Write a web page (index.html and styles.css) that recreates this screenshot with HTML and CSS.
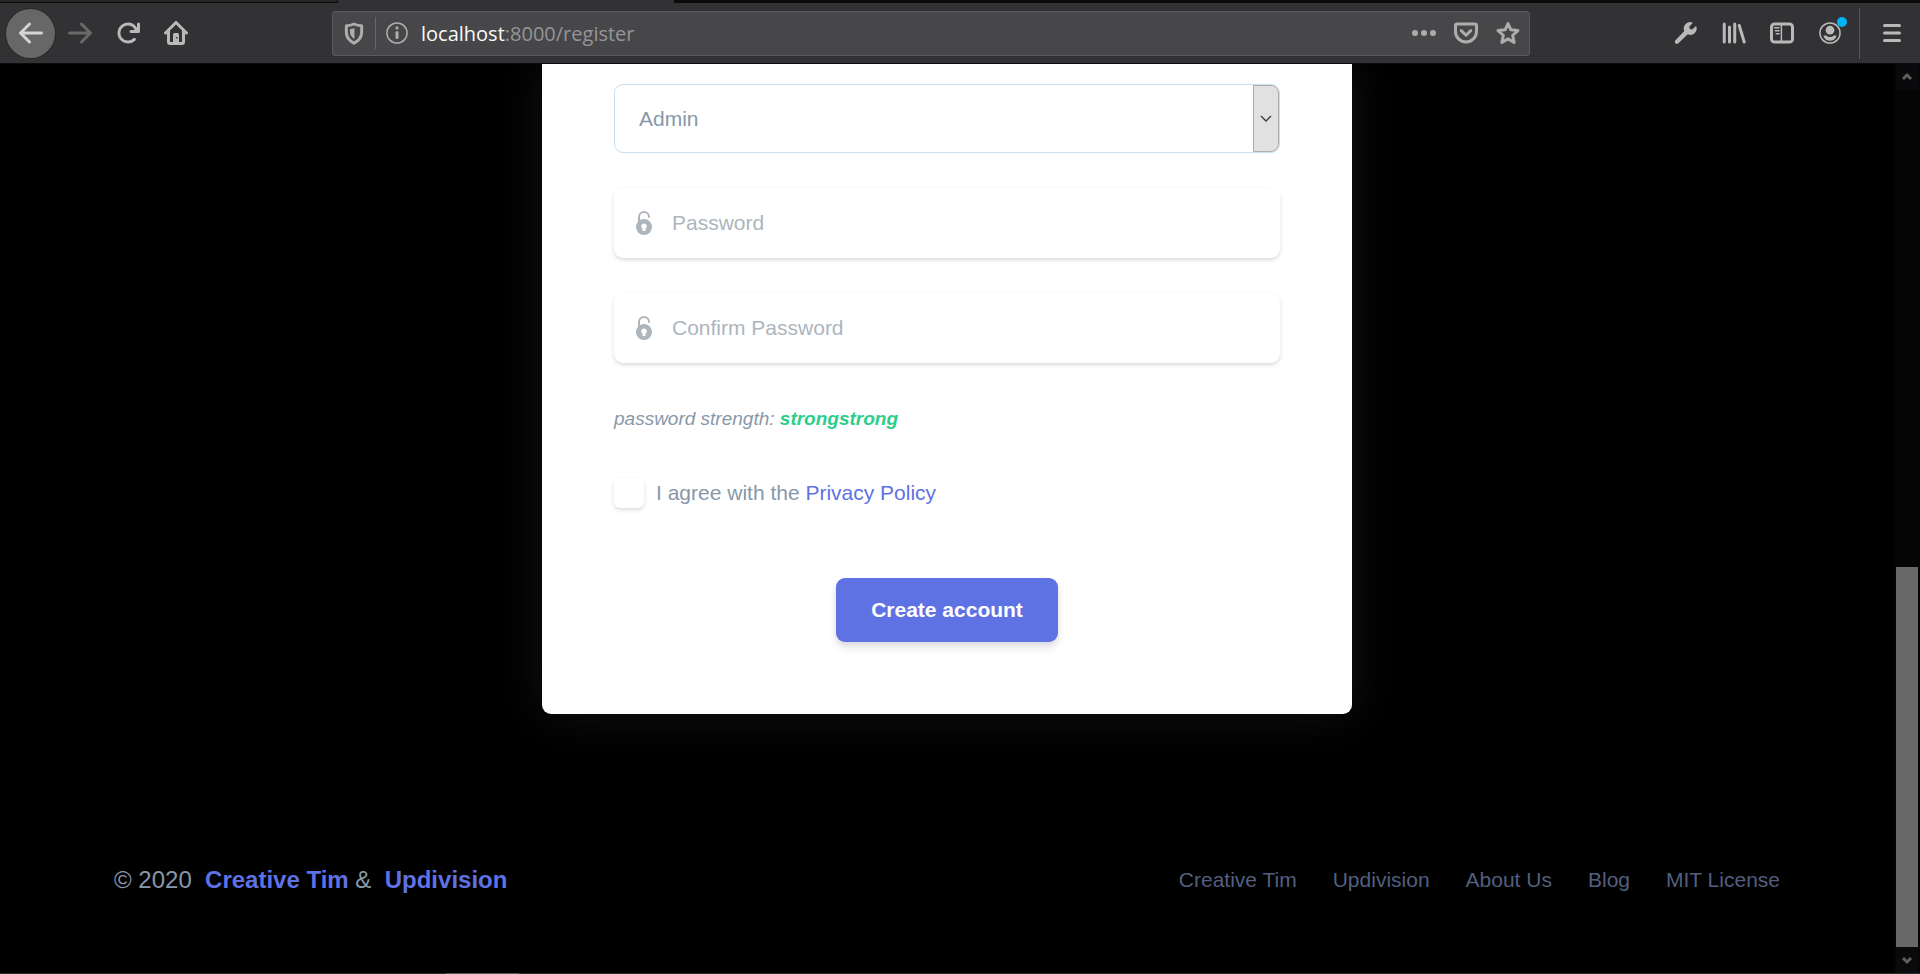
FILE: index.html
```html
<!DOCTYPE html>
<html lang="en">
<head>
<meta charset="utf-8">
<meta name="viewport" content="width=device-width, initial-scale=1">
<title>Register</title>
<link rel="stylesheet" href="styles.css">
</head>
<body>
<header class="chrome">
  <div class="tabstrip">
    <div class="tab"></div>
    <div class="tab tab-active"></div>
  </div>
  <div class="toolbar">
    <button class="tool back" aria-label="Back"><svg viewBox="0 0 16 16"><path d="M15 7H3.414l4.293-4.293a1 1 0 0 0-1.414-1.414l-6 6a1 1 0 0 0 0 1.414l6 6a1 1 0 0 0 1.414-1.414L3.414 9H15a1 1 0 0 0 0-2z"/></svg></button>
    <button class="tool forward" aria-label="Forward" disabled><svg viewBox="0 0 16 16"><path d="M1 7h11.586L8.293 2.707a1 1 0 0 1 1.414-1.414l6 6a1 1 0 0 1 0 1.414l-6 6a1 1 0 0 1-1.414-1.414L12.586 9H1a1 1 0 0 1 0-2z"/></svg></button>
    <button class="tool" aria-label="Reload"><svg viewBox="0 0 16 16"><path d="M15 1a1 1 0 0 0-1 1v2.418A6.995 6.995 0 1 0 8 15a6.954 6.954 0 0 0 4.95-2.05 1 1 0 0 0-1.414-1.414A5.019 5.019 0 1 1 12.549 6H10a1 1 0 0 0 0 2h5a1 1 0 0 0 1-1V2a1 1 0 0 0-1-1z"/></svg></button>
    <button class="tool" aria-label="Home"><svg viewBox="0 0 16 16"><path fill-rule="evenodd" d="M15.707 7.293l-7-7a1 1 0 0 0-1.414 0l-7 7a1 1 0 0 0 1.414 1.414L2 8.414V14a2 2 0 0 0 2 2h8a2 2 0 0 0 2-2V8.414l.293.293a1 1 0 0 0 1.414-1.414zM12 14h-2V9a1 1 0 0 0-1-1H7a1 1 0 0 0-1 1v5H4V6.414l4-4 4 4zM8.1 10.700h.9v.9h-.9z"/></svg></button>
    <div class="urlbar">
      <svg class="shield" viewBox="0 0 16 16"><path class="line2" d="M8 2c2 .9 3.600 1.100 5.100 1.100V7.500c0 3.500-2 5.700-5.100 7.300-3.100-1.600-5.100-3.800-5.100-7.300V3.100C4.400 3.100 6 2.900 8 2z"/><path d="M8.300 4.600V12C6.200 10.700 5.300 9.400 5.300 7.200V5.300C6.500 5.200 7.300 5 8.300 4.600z"/></svg>
      <span class="urlbar-divider"></span>
      <svg class="info" viewBox="0 0 16 16"><circle class="line1" cx="8" cy="8" r="6.700"/><circle cx="8" cy="4.600" r="1.050"/><rect x="7" y="6.600" width="2" height="5.400" rx="1"/></svg>
      <div class="address"><span class="address-host">localhost</span>:8000/register</div>
      <button class="page-action" aria-label="Page actions"><svg viewBox="0 0 16 16"><circle cx="2" cy="8" r="2"/><circle cx="8" cy="8" r="2"/><circle cx="14" cy="8" r="2"/></svg></button>
      <button class="page-action" aria-label="Save to Pocket"><svg viewBox="0 0 16 16"><path class="line2" d="M2 2h12a1 1 0 0 1 1 1v4a7 7 0 0 1-14 0V3a1 1 0 0 1 1-1z"/><path class="line2" d="M4.800 6.400L8 9.500l3.200-3.100"/></svg></button>
      <button class="page-action" aria-label="Bookmark"><svg viewBox="0 0 16 16"><path class="line2" d="M8 1.700l1.900 4.200 4.700.5-3.500 3.100 1 4.800L8 11.900l-4.100 2.400 1-4.800-3.500-3.100 4.700-.5z"/></svg></button>
    </div>
    <button class="tool" aria-label="Developer tools"><svg viewBox="0 0 16 16"><path d="M14.700 3.300l-2.500 2.400-1.700-.3-.3-1.700 2.400-2.500A4.200 4.200 0 0 0 6.900 6.700L1 12.900a1.300 1.300 0 0 0 1.900 1.900l6.300-5.900a4.200 4.200 0 0 0 5.500-5.600z"/></svg></button>
    <button class="tool" aria-label="Library"><svg viewBox="0 0 16 16"><path class="line2" d="M1.500 2v12M5 4v10M8.500 2v12M11.500 3l3.300 11"/></svg></button>
    <button class="tool" aria-label="Sidebars"><svg viewBox="0 0 16 16"><rect class="line2" x="1" y="2" width="14" height="12" rx="2"/><path class="line1" d="M7.600 2v12M3 4.500h3M3.600 6.500H6M4.200 8.500H6"/></svg></button>
    <button class="tool account" aria-label="Account"><svg viewBox="0 0 16 16"><circle class="line1" cx="8" cy="8" r="6.700"/><circle cx="8" cy="6.100" r="2.900"/><path d="M4.300 9.600h1.100a4 4 0 0 0 5.200 0h1.100c.5 0 .8.400.6.800a4.700 4.700 0 0 1-8.600 0c-.2-.4.100-.8.600-.8z"/></svg><span class="badge"></span></button>
    <span class="toolbar-divider"></span>
    <button class="tool" aria-label="Menu"><svg viewBox="0 0 16 16"><path class="line2" d="M3 3h10M3 8h10M3 13h10"/></svg></button>
  </div>
</header>
<div class="viewport">
  <div class="page">
    <main class="card">
      <form class="form">
        <div class="role">
          <select class="role-select" aria-label="Role"><option>Admin</option><option>User</option></select>
          <span class="role-arrow"><svg viewBox="0 0 12 12"><path d="M1 3l5 5 5-5"/></svg></span>
        </div>
        <label class="field">
          <svg class="lock" viewBox="0 0 16 24"><path class="shackle" d="M3 12V6a5 5 0 0 1 10 0"/><path fill-rule="evenodd" d="M8 8a8 8 0 1 0 0 16A8 8 0 0 0 8 8zm0 4.500a2.800 2.800 0 0 1 1.500 5.200V20h-3v-2.300A2.800 2.800 0 0 1 8 12.500z"/></svg>
          <input class="field-input" type="password" placeholder="Password" aria-label="Password">
        </label>
        <label class="field">
          <svg class="lock" viewBox="0 0 16 24"><path class="shackle" d="M3 12V6a5 5 0 0 1 10 0"/><path fill-rule="evenodd" d="M8 8a8 8 0 1 0 0 16A8 8 0 0 0 8 8zm0 4.500a2.800 2.800 0 0 1 1.500 5.200V20h-3v-2.300A2.800 2.800 0 0 1 8 12.500z"/></svg>
          <input class="field-input" type="password" placeholder="Confirm Password" aria-label="Confirm Password">
        </label>
        <p class="strength">password strength: <strong class="strength-value">strongstrong</strong></p>
        <div class="agree">
          <input class="agree-box" type="checkbox" id="agree">
          <label for="agree">I agree with the <a class="link" href="#privacy">Privacy Policy</a></label>
        </div>
        <button class="submit" type="button">Create account</button>
      </form>
    </main>
    <footer class="footer">
      <div class="copyright">© 2020 &nbsp;<a class="brand" href="#creative-tim">Creative Tim</a> &amp; &nbsp;<a class="brand" href="#updivision">Updivision</a></div>
      <nav class="footer-nav">
        <a href="#creative-tim">Creative Tim</a>
        <a href="#updivision">Updivision</a>
        <a href="#about">About Us</a>
        <a href="#blog">Blog</a>
        <a href="#license">MIT License</a>
      </nav>
    </footer>
  </div>
  <div class="scrollbar">
    <div class="scroll-end"><svg viewBox="0 0 12 10"><path d="M2 7l4-4 4 4"/></svg></div>
    <div class="scroll-track"><div class="scroll-thumb"></div></div>
    <div class="scroll-end"><svg viewBox="0 0 12 10"><path d="M2 3l4 4 4-4"/></svg></div>
  </div>
</div>
<div class="taskbar-edge"><span class="taskbar-item"></span></div>
</body>
</html>
```

FILE: styles.css
```css
* { box-sizing: border-box; }

body {
  margin: 0;
  min-height: 100vh;
  display: flex;
  flex-direction: column;
  background: #000;
  color: #8898aa;
  font-family: "Liberation Sans", Arial, sans-serif;
  font-size: 21px;
}

button, input, select { font: inherit; }
a { text-decoration: none; }

/* Browser chrome */
.chrome {
  background: #323234;
  border-bottom: 1px solid #0c0c0d;
}
.tabstrip {
  display: flex;
  height: 3px;
  background: #0c0c0d;
}
.tab {
  width: 338px;
  background: #252526;
  border-right: 1px solid #0c0c0d;
  border-bottom: 1px solid #0c0c0d;
}
.tab-active {
  width: 336px;
  background: #323234;
  border: 0;
}
.toolbar {
  display: flex;
  align-items: center;
  height: 60px;
  padding: 0 4px 0 6px;
}
.tool, .page-action {
  display: flex;
  flex: none;
  align-items: center;
  justify-content: center;
  height: 48px;
  padding: 0;
  border: 0;
  background: none;
}
.tool { width: 48px; }
.page-action { width: 42px; }
.toolbar svg {
  flex: none;
  width: 24px;
  height: 24px;
  fill: #b9b9ba;
}
.toolbar .line1, .toolbar .line2 {
  fill: none;
  stroke: #b9b9ba;
  stroke-width: 1;
  stroke-linecap: round;
  stroke-linejoin: round;
}
.toolbar .line2 { stroke-width: 2; }
.back {
  width: 49px;
  height: 49px;
  margin-right: 1px;
  border-radius: 50%;
  background: #676768;
  box-shadow: 0 0 0 1px #29292a;
}
.toolbar .back svg { fill: #d4d4d4; }
.toolbar .forward svg { fill: #69696a; }
.urlbar {
  display: flex;
  flex: 1;
  align-items: center;
  height: 45px;
  margin: 0 132px;
  padding: 0 0 0 9px;
  border: 1px solid #5a5a5c;
  border-radius: 3px;
  background: #474749;
}
.toolbar .urlbar svg { fill: #adadae; }
.toolbar .urlbar .line1, .toolbar .urlbar .line2 { stroke: #adadae; }
.urlbar-divider {
  width: 1px;
  height: 32px;
  margin: 0 9px;
  background: #68686a;
}
.address {
  flex: 1;
  padding-left: 12px;
  color: #959597;
  font-family: "Open Sans", "Noto Sans", sans-serif;
  font-size: 20px;
}
.address-host { color: #f9f9fa; }
.account { position: relative; }
.badge {
  position: absolute;
  top: 8px;
  right: 7px;
  width: 10px;
  height: 10px;
  border-radius: 50%;
  background: #00b3f4;
}
.toolbar-divider {
  width: 1px;
  height: 51px;
  margin: 0 8px 0 5px;
  background: #59595b;
}

/* Page */
.viewport {
  display: flex;
  flex: 1;
  overflow: hidden;
}
.page {
  display: flex;
  flex: 1;
  flex-direction: column;
  align-items: center;
}
.card {
  width: 100%;
  max-width: 810px;
  padding: 20px 72px 72px;
  border-radius: 0 0 9px 9px;
  background: #fff;
  box-shadow: 0 0 48px rgba(136, 152, 170, 0.13);
}
.form {
  display: flex;
  flex-direction: column;
}
.role {
  position: relative;
  margin-bottom: 35px;
}
.role-select {
  display: block;
  width: 100%;
  height: 69px;
  padding: 0 24px;
  border: 1px solid #c8e1f0;
  border-radius: 9px;
  background: #fff;
  color: #8898aa;
  appearance: none;
}
.role-arrow {
  position: absolute;
  top: 1px;
  right: 1px;
  bottom: 1px;
  display: flex;
  align-items: center;
  justify-content: center;
  width: 26px;
  border: 1px solid #adadad;
  border-radius: 0 8px 8px 0;
  background: #e1e1e1;
  pointer-events: none;
}
.role-arrow svg {
  width: 12px;
  height: 12px;
  fill: none;
  stroke: #3c3c3c;
  stroke-width: 1.4;
}
.field {
  display: flex;
  align-items: center;
  height: 70px;
  margin-bottom: 35px;
  padding: 0 22px;
  gap: 20px;
  border-radius: 9px;
  background: #fff;
  box-shadow: 0 2px 4px rgba(50, 50, 93, 0.15), 0 2px 0 rgba(0, 0, 0, 0.02);
}
.lock {
  flex: none;
  width: 16px;
  height: 24px;
  fill: #adb5bd;
}
.shackle {
  fill: none;
  stroke: #adb5bd;
  stroke-width: 2;
  stroke-linecap: round;
}
.field-input {
  flex: 1;
  min-width: 0;
  padding: 0;
  border: 0;
  outline: 0;
  background: none;
  color: #8898aa;
}
.field-input::placeholder {
  color: #adb5bd;
  opacity: 1;
}
.strength {
  margin: 7px 0 45px;
  font-size: 19px;
  font-style: italic;
  line-height: 28px;
}
.strength-value { color: #2dce89; }
.agree {
  display: flex;
  align-items: center;
  gap: 12px;
  line-height: 30px;
}
.agree-box {
  flex: none;
  width: 30px;
  height: 30px;
  margin: 0;
  border-radius: 6px;
  background: #fff;
  box-shadow: 0 2px 4px rgba(50, 50, 93, 0.15), 0 2px 0 rgba(0, 0, 0, 0.02);
  appearance: none;
}
.link { color: #5e72e4; }
.submit {
  align-self: center;
  height: 64px;
  margin-top: 70px;
  padding: 0 35px;
  border: 0;
  border-radius: 9px;
  background: #5e72e4;
  box-shadow: 0 6px 9px rgba(50, 50, 93, 0.11), 0 2px 5px rgba(0, 0, 0, 0.08);
  color: #fff;
  font-weight: 700;
}

/* Footer */
.footer {
  display: flex;
  flex-wrap: wrap;
  align-items: center;
  justify-content: space-between;
  gap: 24px;
  width: 100%;
  max-width: 1710px;
  margin-top: auto;
  padding: 72px 22px 79px;
}
.copyright {
  font-size: 24px;
}
.brand {
  color: #5e72e4;
  font-weight: 700;
}
.footer-nav {
  display: flex;
  flex-wrap: wrap;
  gap: 12px 36px;
}
.footer-nav a { color: #525f7f; }

/* Scrollbar */
.scrollbar {
  display: flex;
  flex: none;
  flex-direction: column;
  width: 26px;
  padding: 0 2px;
  background: #050505;
}
.scroll-end {
  display: flex;
  align-items: center;
  justify-content: center;
  height: 26px;
  background: #0a0a0c;
}
.scroll-end svg {
  width: 12px;
  height: 10px;
  fill: none;
  stroke: #5f5f60;
  stroke-width: 3;
}
.scroll-track {
  display: flex;
  flex: 1;
  flex-direction: column;
  justify-content: flex-end;
}
.scroll-thumb {
  height: 44.3%;
  background: #686868;
}
.taskbar-edge {
  height: 1px;
  padding-left: 446px;
  background: #2b2b2b;
}
.taskbar-item {
  display: block;
  width: 73px;
  height: 1px;
  background: #555;
}
```
